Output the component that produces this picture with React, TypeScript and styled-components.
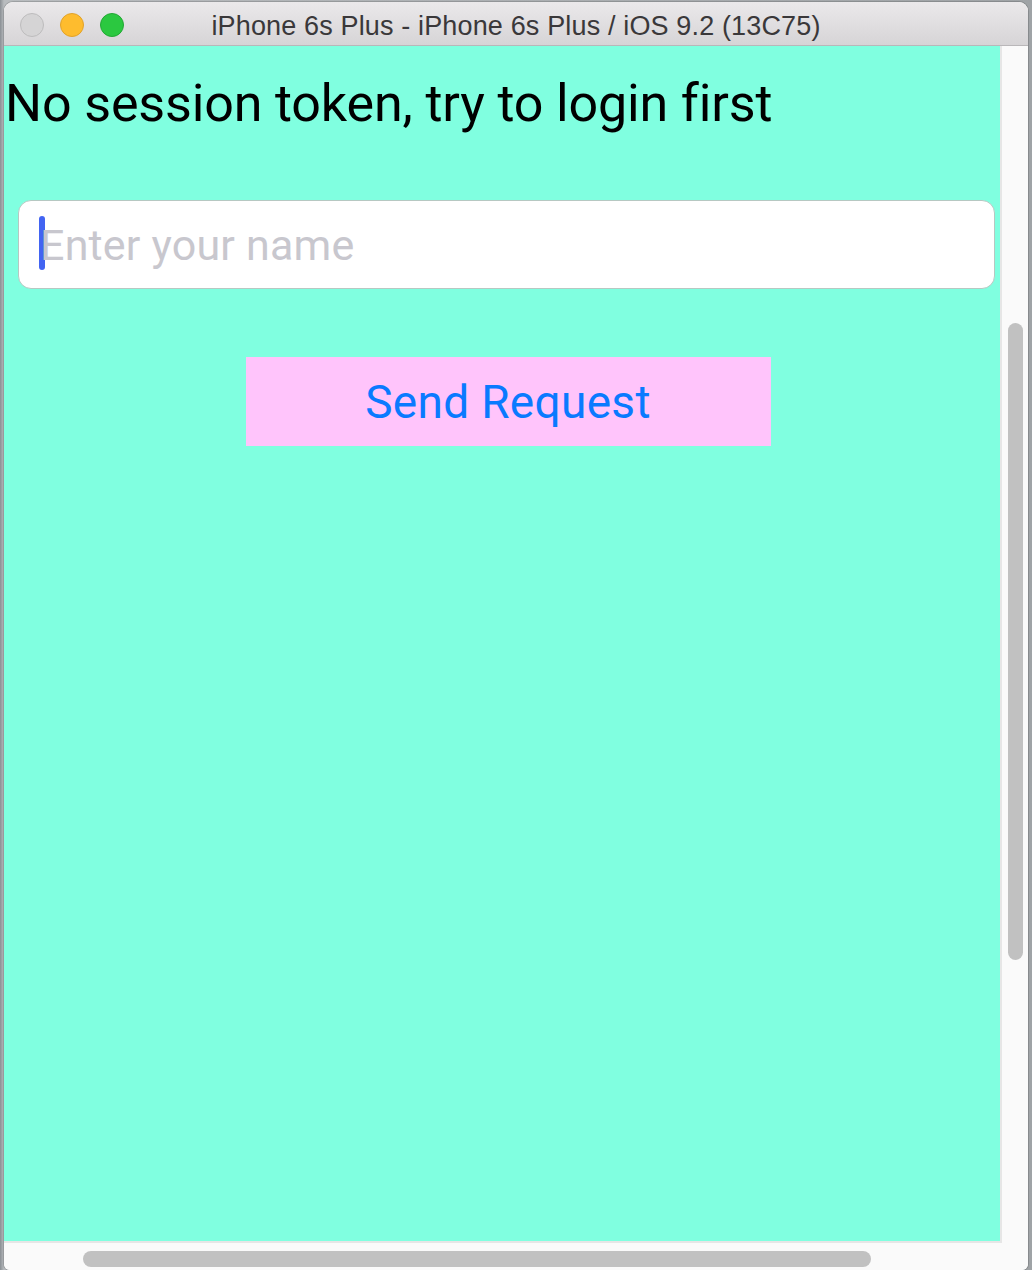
import React from "react";
import styled, { createGlobalStyle } from "styled-components";

const Global = createGlobalStyle`
  html, body { margin: 0; padding: 0; }
  body {
    background: linear-gradient(90deg, #8a8f94 0px, #b9bcbf 4px, #9fa3a6 100%);
    width: 1032px;
    height: 1270px;
    overflow: hidden;
    font-family: Roboto, "Liberation Sans", sans-serif;
  }
`;

const Window = styled.div`
  margin: 2px 4px 0 4px;
  height: 1268px;
  display: flex;
  flex-direction: column;
  border-radius: 9px 9px 6px 6px;
  overflow: hidden;
  background: #fafafa;
  box-shadow: 0 0 0 1px rgba(0, 0, 0, 0.15);
`;

const TitleBar = styled.div`
  height: 44px;
  flex: none;
  position: relative;
  display: flex;
  align-items: center;
  justify-content: center;
  padding-top: 5px;
  box-sizing: border-box;
  background: linear-gradient(#ebe9eb, #d6d4d6);
  border-bottom: 1px solid #b9b7b9;
`;

const Lights = styled.div`
  position: absolute;
  left: 16px;
  top: 11px;
  display: flex;
  gap: 16px;
`;

const Light = styled.span<{ $fill: string; $edge: string }>`
  width: 24px;
  height: 24px;
  border-radius: 50%;
  box-sizing: border-box;
  background: ${(p) => p.$fill};
  border: 1px solid ${(p) => p.$edge};
`;

const Title = styled.div`
  font-family: "Liberation Sans", Arial, sans-serif;
  font-size: 27px;
  color: #3a383a;
  letter-spacing: 0.15px;
`;

const Middle = styled.div`
  flex: 1;
  display: flex;
  min-height: 0;
`;

const Screen = styled.div`
  flex: 1;
  background: #80ffe0;
  display: flex;
  flex-direction: column;
  border-right: 2px solid #e6e6e6;
  border-bottom: 2px solid #e6e6e6;
`;

const Heading = styled.div`
  font-size: 52px;
  color: #000;
  margin: 28px 0 0 1px;
  line-height: 60px;
  letter-spacing: -0.15px;
`;

const Field = styled.div`
  margin: 66px 5px 0 14px;
  height: 87px;
  background: #fff;
  border: 1px solid #b6c8c2;
  border-radius: 13px;
  display: flex;
  align-items: center;
  padding-left: 20px;
`;

const Caret = styled.span`
  width: 6px;
  height: 54px;
  border-radius: 3px;
  background: #4264f2;
  flex: none;
  margin-top: -4px;
`;

const Placeholder = styled.span`
  font-size: 43px;
  color: #c8c7ce;
  margin-left: -5px;
  letter-spacing: 0.2px;
`;

const ButtonRow = styled.div`
  display: flex;
  justify-content: center;
  margin-top: 68px;
  padding-left: 12px;
`;

const Button = styled.div`
  width: 525px;
  height: 89px;
  background: #ffc4fb;
  color: #0a7aff;
  font-size: 46px;
  letter-spacing: 0.3px;
  display: flex;
  align-items: center;
  justify-content: center;
`;

const VTrack = styled.div`
  width: 26px;
  flex: none;
  background: #fafafa;
  padding-top: 277px;
  box-sizing: border-box;
  display: flex;
  justify-content: center;
`;

const VThumb = styled.div`
  width: 15px;
  height: 637px;
  border-radius: 8px;
  background: #c1c1c1;
`;

const HTrack = styled.div`
  height: 27px;
  flex: none;
  background: #fafafa;
  padding: 8px 0 0 79px;
  box-sizing: border-box;
`;

const HThumb = styled.div`
  width: 788px;
  height: 16px;
  border-radius: 8px;
  background: #c1c1c1;
`;

export default function App() {
  return (
    <>
      <Global />
      <Window>
        <TitleBar>
          <Lights>
            <Light $fill="#d5d4d5" $edge="#bdbcbd" />
            <Light $fill="#febc2e" $edge="#e1a22a" />
            <Light $fill="#2bc840" $edge="#22a834" />
          </Lights>
          <Title>iPhone 6s Plus - iPhone 6s Plus / iOS 9.2 (13C75)</Title>
        </TitleBar>
        <Middle>
          <Screen>
            <Heading>No session token, try to login first</Heading>
            <Field>
              <Caret />
              <Placeholder>Enter your name</Placeholder>
            </Field>
            <ButtonRow>
              <Button>Send Request</Button>
            </ButtonRow>
          </Screen>
          <VTrack>
            <VThumb />
          </VTrack>
        </Middle>
        <HTrack>
          <HThumb />
        </HTrack>
      </Window>
    </>
  );
}
